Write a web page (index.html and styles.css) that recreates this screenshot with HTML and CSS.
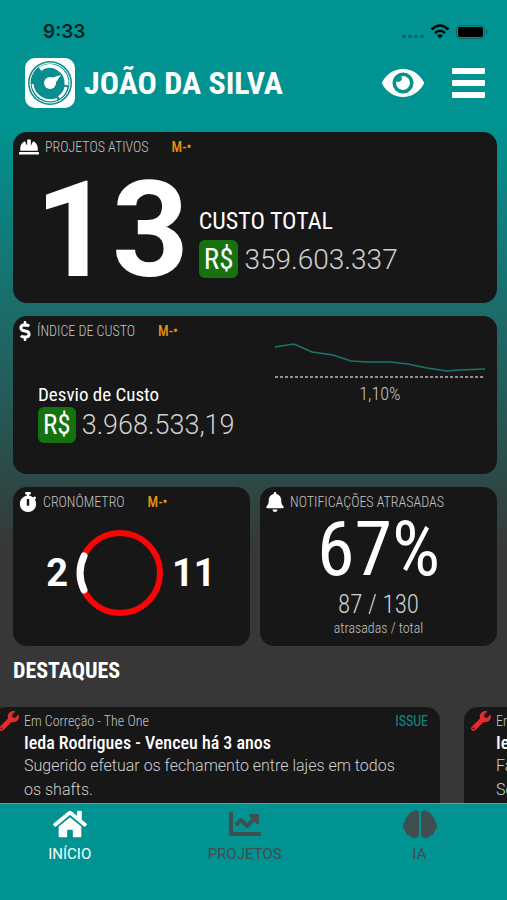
FILE: index.html
```html
<!DOCTYPE html>
<html lang="pt-BR">
<head>
<meta charset="utf-8">
<meta name="viewport" content="width=device-width, initial-scale=1">
<title>Início</title>
<link rel="stylesheet" href="styles.css">
</head>
<body>
<svg class="sprite" aria-hidden="true">
  <symbol id="wrench" viewBox="0 0 512 512"><path d="M507.73 109.1c-2.24-9.03-13.54-12.09-20.12-5.51l-74.36 74.36-67.88-11.31-11.31-67.88 74.36-74.36c6.62-6.62 3.43-17.9-5.66-20.16-47.38-11.74-99.55.91-136.58 37.93-39.64 39.64-50.55 97.1-34.05 147.2L18.74 402.76c-24.99 24.99-24.99 65.51 0 90.5 24.99 24.99 65.51 24.99 90.5 0l213.21-213.21c50.12 16.71 107.47 5.68 147.37-34.22 37.07-37.07 49.7-89.32 37.91-136.73zM64 472c-13.25 0-24-10.75-24-24 0-13.26 10.75-24 24-24s24 10.74 24 24c0 13.25-10.75 24-24 24z"/></symbol>
</svg>
<div class="app">
  <div class="status">
    <span class="clock">9:33</span>
    <svg class="signals" viewBox="0 0 88 18" aria-hidden="true">
      <g fill="#0b6867"><rect x="1" y="12" width="4" height="3" rx="1"/><rect x="7" y="12" width="4" height="3" rx="1"/><rect x="13" y="12" width="4" height="3" rx="1"/><rect x="19" y="12" width="4" height="3" rx="1"/></g>
      <g fill="none" stroke="#020b0b" stroke-width="2.6"><path d="M30.5 6.5Q39 -1.5 47.5 6.5"/><path d="M34 10Q39 5.5 44 10"/></g>
      <path d="M36 12.5Q39 10 42 12.5L39 15.5z" fill="#020b0b"/>
      <rect x="55.5" y="2.5" width="28" height="13" rx="4" fill="none" stroke="#0b6867"/>
      <rect x="57" y="4" width="25" height="10" rx="2" fill="#000"/>
      <path d="M85 6.5q3 2.5 0 5z" fill="#0b6867"/>
    </svg>
  </div>
  <header class="header">
    <svg class="logo" viewBox="0 0 50 50" aria-hidden="true">
      <rect width="50" height="50" rx="10" fill="#fff"/>
      <circle cx="25" cy="25" r="22" fill="#0a8d8f"/>
      <circle cx="25" cy="25" r="20" fill="none" stroke="#fff"/>
      <circle cx="25" cy="25" r="19" fill="#0a8d8f"/>
      <g fill="none" stroke="#fff">
        <path d="M15 11A17 17 0 0 1 41.5 27" stroke-width="4"/>
        <path d="M41 29A17 17 0 0 1 34 39.5" stroke-width="3"/>
        <path d="M32 41A18 18 0 0 1 7.500 26" stroke-width="2"/>
      </g>
      <circle cx="25" cy="25" r="6" fill="#fff"/>
      <path d="M26 20L36 17L29 27z" fill="#fff"/>
    </svg>
    <h1>JOÃO DA SILVA</h1>
    <button class="icon-btn" aria-label="Mostrar valores"><svg class="eye" viewBox="0 64 576 384"><path d="M572.52 241.4C518.29 135.59 410.93 64 288 64S57.68 135.64 3.48 241.41a32.35 32.35 0 0 0 0 29.19C57.71 376.41 165.07 448 288 448s230.32-71.64 284.52-177.41a32.35 32.35 0 0 0 0-29.19zM288 400a144 144 0 1 1 144-144 143.93 143.93 0 0 1-144 144zm0-240a95.31 95.31 0 0 0-25.31 3.79 47.85 47.85 0 0 1-66.9 66.9A95.78 95.78 0 1 0 288 160z"/></svg></button>
    <button class="icon-btn" aria-label="Menu"><svg class="menu" viewBox="0 0 33 30"><rect y="0" width="33" height="6" rx="1"/><rect y="12" width="33" height="6" rx="1"/><rect y="24" width="33" height="6" rx="1"/></svg></button>
  </header>
  <main class="main">
    <section class="card projects">
      <div class="card-head">
        <svg class="ico" viewBox="0 32 512 448" aria-hidden="true"><path d="M480 288c0-80.25-49.28-148.92-119.19-177.62L304 224V80a16 16 0 0 0-16-16h-64a16 16 0 0 0-16 16v144l-56.81-113.62C81.28 139.08 32 207.75 32 288v64h448zm16 96H16a16 16 0 0 0-16 16v32a16 16 0 0 0 16 16h480a16 16 0 0 0 16-16v-32a16 16 0 0 0-16-16z"/></svg>
        <h2>PROJETOS ATIVOS</h2><span class="tag">M-•</span>
      </div>
      <div class="projects-body">
        <strong class="count">13</strong>
        <div class="total">
          <h3>CUSTO TOTAL</h3>
          <p class="money"><span class="currency">R$</span><span class="amount">359.603.337</span></p>
        </div>
      </div>
    </section>
    <section class="card cost">
      <div class="card-head">
        <svg class="ico narrow" viewBox="0 0 288 512" aria-hidden="true"><path d="M209.2 233.4l-108-31.6C88.7 198.2 80 186.5 80 173.5c0-16.3 13.2-29.5 29.5-29.5h66.3c12.2 0 24.2 3.7 34.2 10.5 6.1 4.1 14.3 3.1 19.5-2l34.8-34c7.1-6.9 6.1-18.4-1.8-24.5C238 74.8 207.4 64.1 176 64V16c0-8.8-7.2-16-16-16h-32c-8.8 0-16 7.2-16 16v48h-2.5C45.8 64-5.4 118.7.5 183.6c4.2 46.1 39.4 83.6 83.8 96.6l102.5 30c12.5 3.7 21.2 15.3 21.2 28.3 0 16.3-13.2 29.5-29.5 29.5h-66.3C100 368 88 364.3 78 357.5c-6.1-4.1-14.3-3.1-19.5 2l-34.8 34c-7.1 6.9-6.1 18.4 1.8 24.5 24.5 19.2 55.1 29.9 86.5 30v48c0 8.8 7.2 16 16 16h32c8.8 0 16-7.2 16-16v-48.2c46.6-.9 90.3-28.6 105.7-72.7 21.5-61.6-14.6-124.8-72.5-141.7z"/></svg>
        <h2>ÍNDICE DE CUSTO</h2><span class="tag">M-•</span>
      </div>
      <div class="cost-body">
        <div class="deviation">
          <h3>Desvio de Custo</h3>
          <p class="money small"><span class="currency">R$</span><span class="amount">3.968.533,19</span></p>
        </div>
        <figure class="trend">
          <svg viewBox="0 0 210 36" preserveAspectRatio="none" aria-hidden="true">
            <polyline points="0,5 19,2 37,10 58,13 76,19 93,20 115,20 133,22 152,26 172,29 184,28 210,27" fill="none" stroke="#1c746e" stroke-width="1.5"/>
            <path d="M0 35H210" stroke="#bbb" stroke-width="1.5" stroke-dasharray="3 2"/>
          </svg>
          <figcaption>1,10%</figcaption>
        </figure>
      </div>
    </section>
    <div class="pair">
      <section class="card timer">
        <div class="card-head">
          <svg class="ico mid" viewBox="0 0 448 512" aria-hidden="true"><path d="M432 304c0 114.9-93.1 208-208 208S16 418.9 16 304c0-104 76.3-190.2 176-205.5V64h-28c-6.6 0-12-5.4-12-12V12c0-6.6 5.4-12 12-12h120c6.6 0 12 5.4 12 12v40c0 6.6-5.4 12-12 12h-28v34.5c37.5 5.8 71.7 21.6 99.7 44.6l27.5-27.5c4.7-4.7 12.3-4.7 17 0l28.3 28.3c4.7 4.7 4.7 12.3 0 17l-29.4 29.4-.6.6C419.7 223.3 432 262.2 432 304zm-176 36V188.5c0-6.6-5.4-12-12-12h-40c-6.6 0-12 5.4-12 12V340c0 6.6 5.4 12 12 12h40c6.6 0 12-5.4 12-12z"/></svg>
          <h2>CRONÔMETRO</h2><span class="tag">M-•</span>
        </div>
        <div class="timer-body">
          <strong>2</strong>
          <svg class="ring" viewBox="0 0 88 88" aria-hidden="true"><circle cx="44" cy="44" r="40" fill="none" stroke="#f80505" stroke-width="6"/><path d="M8 27A40 40 0 0 0 8 61" fill="none" stroke="#fff" stroke-width="7" stroke-linecap="round"/></svg>
          <strong>11</strong>
        </div>
      </section>
      <section class="card late">
        <div class="card-head">
          <svg class="ico mid" viewBox="0 0 448 512" aria-hidden="true"><path d="M224 512c35.32 0 63.97-28.65 63.97-64H160.03c0 35.35 28.65 64 63.97 64zm215.39-149.71c-19.32-20.76-55.47-51.99-55.47-154.29 0-77.7-54.48-139.9-127.94-155.16V32c0-17.67-14.32-32-31.98-32s-31.98 14.33-31.98 32v20.84C118.56 68.1 64.08 130.3 64.08 208c0 102.3-36.15 133.53-55.47 154.29-6 6.45-8.66 14.16-8.61 21.71.11 16.4 12.98 32 32.1 32h383.8c19.12 0 32-15.6 32.1-32 .05-7.55-2.61-15.27-8.61-21.71z"/></svg>
          <h2>NOTIFICAÇÕES ATRASADAS</h2>
        </div>
        <strong class="percent">67%</strong>
        <p class="ratio">87 / 130</p>
        <p class="legend">atrasadas / total</p>
      </section>
    </div>
    <h2 class="section-title">DESTAQUES</h2>
    <div class="highlights">
      <article class="card note">
        <svg class="note-ico"><use href="#wrench"/></svg>
        <div class="note-text">
          <div class="note-top"><span>Em Correção - The One</span><span class="kind">ISSUE</span></div>
          <h3>Ieda Rodrigues - Venceu há 3 anos</h3>
          <p>Sugerido efetuar os fechamento entre lajes em todos os shafts.</p>
        </div>
      </article>
      <article class="card note">
        <svg class="note-ico"><use href="#wrench"/></svg>
        <div class="note-text">
          <div class="note-top"><span>Em</span></div>
          <h3>Ieda</h3>
          <p>Fa<br>Se</p>
        </div>
      </article>
    </div>
  </main>
  <nav class="tabs">
    <a href="#inicio" class="active"><svg viewBox="0 32 576 448" aria-hidden="true"><path d="M280.37 148.26L96 300.11V464a16 16 0 0 0 16 16l112.06-.29a16 16 0 0 0 15.92-16V368a16 16 0 0 1 16-16h64a16 16 0 0 1 16 16v95.64a16 16 0 0 0 16 16.05L464 480a16 16 0 0 0 16-16V300L295.67 148.26a12.19 12.19 0 0 0-15.3 0zM571.6 251.47L488 182.56V44.05a12 12 0 0 0-12-12h-56a12 12 0 0 0-12 12v72.61L318.47 43a48 48 0 0 0-61 0L4.34 251.47a12 12 0 0 0-1.6 16.9l25.5 31A12 12 0 0 0 45.15 301l235.22-193.74a12.19 12.19 0 0 1 15.3 0L530.9 301a12 12 0 0 0 16.9-1.6l25.5-31a12 12 0 0 0-1.7-16.93z"/></svg>INÍCIO</a>
    <a href="#projetos"><svg viewBox="0 32 512 448" aria-hidden="true"><path d="M496 384H64V80c0-8.84-7.16-16-16-16H16C7.16 64 0 71.16 0 80v336c0 17.67 14.33 32 32 32h464c8.84 0 16-7.16 16-16v-32c0-8.84-7.16-16-16-16zM464 96H345.94c-21.38 0-32.09 25.85-16.97 40.97l32.4 32.4L288 242.75l-73.37-73.37c-12.5-12.5-32.76-12.5-45.25 0l-68.69 68.69c-6.25 6.25-6.25 16.38 0 22.63l22.62 22.62c6.25 6.25 16.38 6.25 22.63 0L192 237.25l73.37 73.37c12.5 12.5 32.76 12.5 45.25 0l96-96 32.4 32.4c15.12 15.12 40.97 4.41 40.97-16.97V112c.01-8.84-7.15-16-15.99-16z"/></svg>PROJETOS</a>
    <a href="#ia"><svg viewBox="0 0 34 28" aria-hidden="true"><path d="M16 3V25Q15 28.5 11 28Q8 28 6.5 25.5Q2.5 25 2.5 21Q-.5 18.5 0 16Q0 13 2 11.5Q1.5 8 5 6Q6 2 10 1.5Q12 -.5 14 .5Q16 1 16 3zM18 3V25Q19 28.5 23 28Q26 28 27.5 25.5Q31.5 25 31.5 21Q34.5 18.5 34 16Q34 13 32 11.5Q32.5 8 29 6Q28 2 24 1.5Q22 -.5 20 .5Q18 1 18 3z"/></svg>IA</a>
  </nav>
</div>
</body>
</html>
```
FILE: styles.css
```css
* { box-sizing: border-box; margin: 0; padding: 0; }

body {
  font-family: "Roboto Condensed", "Liberation Sans Narrow", Roboto, sans-serif;
  color: #fff;
  background: #373737;
}

.sprite { display: none; }

.app {
  display: flex;
  flex-direction: column;
  height: 100vh;
  overflow: hidden;
  background: linear-gradient(#009392 0, #009392 124px, #1c6c6a 310px, #2d4946 480px, #373737 550px);
}

svg { display: block; fill: currentColor; flex: none; }

/* status bar */
.status {
  display: flex;
  justify-content: space-between;
  align-items: center;
  padding: 20px 18px 0 43px;
}
.clock { font: 600 19px/24px Inter, sans-serif; color: #032322; }
.signals { width: 88px; height: 18px; }

/* header */
.header {
  display: flex;
  align-items: center;
  padding: 14px 22px 24px 25px;
}
.logo { width: 50px; height: 50px; }
.header h1 { flex: 1; margin-left: 9px; font-size: 32px; line-height: 40px; font-weight: 700; }
.icon-btn { border: 0; background: none; color: #fff; margin-left: 28px; }
.eye { width: 42px; height: 28px; }
.menu { width: 33px; height: 30px; }

/* cards */
.main { flex: 1; min-height: 0; padding: 0 10px 0 13px; overflow: hidden; }
.card { background: #171717; border-radius: 14px; }
.card-head { display: flex; align-items: center; height: 30px; padding-left: 6px; }
.card-head h2 { margin-left: 6px; font-size: 14px; line-height: 20px; font-weight: 300; color: #c4c4c4; }
.ico { width: 20px; height: 20px; }
.ico.mid { width: 18px; }
.ico.narrow { width: 12px; }
.tag { margin-left: 23px; font-size: 14px; line-height: 20px; font-weight: 500; color: #e1920f; }

.projects { height: 171px; margin-bottom: 13px; }
.projects-body { display: flex; padding-left: 22px; }
.count { font-family: Roboto, sans-serif; font-size: 134px; line-height: 138px; font-weight: 700; }
.total { padding: 44px 0 0 10px; }
.total h3 { font-size: 24px; line-height: 30px; font-weight: 400; }
.money { display: flex; align-items: center; gap: 6px; margin-top: 4px; }
.currency {
  padding: 0 5px;
  border-radius: 6px;
  background: #16720e;
  font-size: 29px;
  line-height: 38px;
}
.amount { font-family: Roboto, sans-serif; font-size: 28px; font-weight: 300; color: #d0d0d0; }
.money.small { margin-top: 0; }
.small .currency { font-size: 27px; line-height: 36px; }
.small .amount { font-size: 27px; }

.cost { height: 158px; margin-bottom: 13px; }
.cost-body { display: flex; justify-content: space-between; align-items: flex-start; padding: 0 12px 0 25px; }
.deviation { padding-top: 36px; }
.deviation h3 { font-size: 19px; line-height: 25px; font-weight: 400; }
.trend { width: 47%; margin-top: -4px; }
.trend svg { width: 100%; height: 36px; }
.trend figcaption { margin-top: 4px; font-size: 18px; line-height: 24px; font-weight: 300; text-align: center; color: #c4c4c4; }

.pair { display: grid; grid-template-columns: 1fr 1fr; gap: 10px; }
.pair .card { height: 159px; }
.timer-body {
  display: grid;
  grid-template-columns: 1fr 88px 1fr;
  align-items: center;
  gap: 8px;
  padding: 12px 23px 0 0;
}
.timer-body strong { font: 700 38px/48px Roboto, sans-serif; }
.timer-body strong:first-child { text-align: right; }
.ring { width: 88px; height: 88px; }
.late { text-align: center; }
.percent { display: block; font-size: 76px; line-height: 64px; font-weight: 400; }
.ratio { margin-top: 10px; font-size: 25px; line-height: 28px; font-weight: 300; color: #d0d0d0; }
.legend { font-size: 14px; line-height: 18px; font-weight: 300; color: #c4c4c4; }

/* highlights */
.section-title { margin: 10px 0 22px; font-size: 22px; line-height: 29px; font-weight: 700; }
.highlights { display: flex; gap: 24px; margin: 0 -10px 0 -21px; overflow: hidden; }
.note { display: flex; flex: none; width: 448px; height: 130px; padding: 4px 12px 0 7px; }
.note-ico { width: 20px; height: 20px; color: #e32d2d; }
.note-text { flex: 1; padding-left: 5px; }
.note-top { display: flex; justify-content: space-between; font-size: 14px; line-height: 20px; font-weight: 300; color: #c4c4c4; }
.kind { color: #0b8c83; font-weight: 400; }
.note h3 { font-size: 18px; line-height: 23px; font-weight: 500; }
.note p { padding-right: 24px; font-family: Roboto, sans-serif; font-size: 16px; line-height: 24px; font-weight: 300; color: #d0d0d0; }

/* tab bar */
.tabs {
  display: flex;
  justify-content: flex-end;
  padding: 6px 0 36px;
  border-top: 1px solid #6b9c9a;
  background: #009392;
}
.tabs a {
  display: flex;
  flex: none;
  flex-direction: column;
  align-items: center;
  gap: 6px;
  width: 34.5%;
  font: 400 15px/20px Roboto, sans-serif;
  color: #3f4f50;
  text-decoration: none;
}
.tabs svg { width: 34px; height: 28px; }
.tabs .active { color: #fff; }
```
